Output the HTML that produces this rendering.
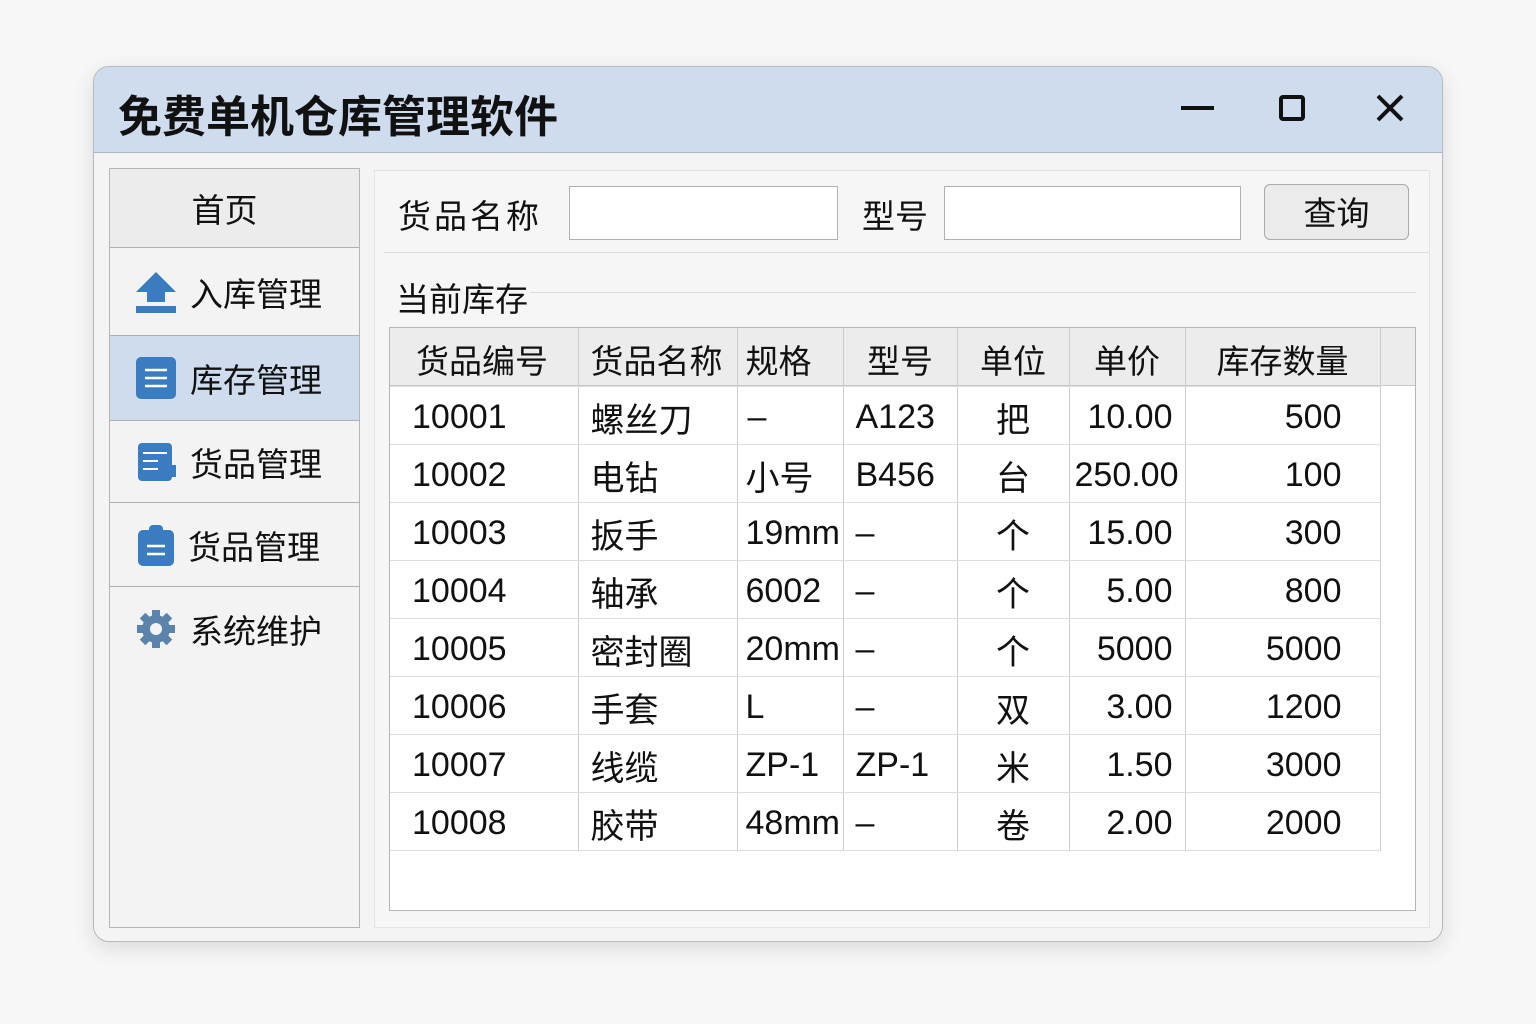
<!DOCTYPE html><html><head><meta charset="utf-8"><style>
*{margin:0;padding:0;box-sizing:border-box}
body{width:1536px;height:1024px;background:#f7f7f7;font-family:"Liberation Sans","Noto Sans CJK SC",sans-serif;color:#111;position:relative;overflow:hidden}
.a{position:absolute}
.win{left:93px;top:66px;width:1350px;height:876px;border:1px solid #b5b9c0;border-radius:16px;background:#f4f4f4;overflow:hidden;box-shadow:0 6px 22px rgba(0,0,0,.12)}
.title{left:0;top:0;width:1350px;height:86px;background:#cfdcee;border-bottom:1px solid #a9b4c4}
.side{left:109px;top:168px;width:251px;height:760px;border:1px solid #b5b5b5;background:#f3f3f3}
.it{position:absolute;left:0;width:249px;border-bottom:1px solid #b0b0b0;font-size:33px;display:flex;align-items:center}
.main{left:374px;top:170px;width:1056px;height:758px;background:#f6f6f6;border:1px solid #e3e3e3}
.inp{background:#fff;border:1px solid #b0b0b0;height:54px}
table{border-collapse:collapse;font-size:33px}
td{height:58px;border-right:1px solid #ccc;border-bottom:1px solid #ddd;padding:0;white-space:nowrap}
tbody td{padding-top:4px}
</style></head><body>
<div class="a win">
 <div class="a title"></div>
 <div class="a" style="left:24px;top:14px;font-size:44px;font-weight:bold">免费单机仓库管理软件</div>
 <div class="a" style="left:1087px;top:39px;width:33px;height:4px;background:#111"></div>
 <div class="a" style="left:1185px;top:28px;width:26px;height:26px;border:4px solid #111;border-radius:4px"></div>
 <svg class="a" style="left:1281px;top:26px" width="30" height="30"><path d="M3 3L27 27M27 3L3 27" stroke="#111" stroke-width="4"/></svg>
</div>
<div class="a side">
 <div class="it" style="top:0;height:79px;background:#ececec;justify-content:center;padding-right:20px">首页</div>
 <div class="it" style="top:79px;height:88px;padding-left:24px">
  <svg width="44" height="44" viewBox="0 0 44 44"><path d="M22 2L42 22H31V32H13V22H2Z" fill="#3a7cc0"/><rect x="2" y="36" width="40" height="7" fill="#3a7cc0"/></svg><span style="margin-left:12px">入库管理</span></div>
 <div class="it" style="top:167px;height:85px;background:#cfdcee;padding-left:26px">
  <svg width="40" height="42" viewBox="0 0 40 42"><rect width="40" height="42" rx="5" fill="#3a7cc0"/><path d="M9 13H31M9 21H31M9 29H31" stroke="#fff" stroke-width="2.5"/></svg><span style="margin-left:14px">库存管理</span></div>
 <div class="it" style="top:252px;height:82px;padding-left:28px">
  <svg width="38" height="38" viewBox="0 0 38 38"><rect width="34" height="38" rx="4" fill="#3a7cc0"/><path d="M5 10H29M5 18H20M5 26H28" stroke="#fff" stroke-width="2"/><rect x="20" y="22" width="18" height="12" fill="#3a7cc0"/></svg><span style="margin-left:14px">货品管理</span></div>
 <div class="it" style="top:334px;height:84px;padding-left:28px">
  <svg width="36" height="42" viewBox="0 0 36 42"><rect y="6" width="36" height="36" rx="5" fill="#3a7cc0"/><rect x="11" y="1" width="14" height="10" rx="4" fill="#3a7cc0"/><path d="M9 22H27M9 30H27" stroke="#fff" stroke-width="2.5"/></svg><span style="margin-left:14px">货品管理</span></div>
 <div class="it" style="top:418px;height:84px;padding-left:26px;border-bottom:none">
  <svg width="40" height="40" viewBox="0 0 40 40"><g fill="#5b84ad"><circle cx="20" cy="20" r="14"/><g id="t"><rect x="16" y="1" width="8" height="9"/><rect x="16" y="30" width="8" height="9"/></g><use href="#t" transform="rotate(45 20 20)"/><use href="#t" transform="rotate(90 20 20)"/><use href="#t" transform="rotate(135 20 20)"/></g><circle cx="20" cy="20" r="6" fill="#f3f3f3"/></svg><span style="margin-left:14px">系统维护</span></div>
</div>
<div class="a main"></div>
<div class="a" style="left:398px;top:190px;font-size:33px;letter-spacing:3px">货品名称</div>
<div class="a inp" style="left:569px;top:186px;width:269px"></div>
<div class="a" style="left:862px;top:190px;font-size:33px">型号</div>
<div class="a inp" style="left:944px;top:186px;width:297px"></div>
<div class="a" style="left:1264px;top:184px;width:145px;height:56px;border:1px solid #aaa;border-radius:6px;background:#ebebeb;font-size:33px;text-align:center;line-height:58px">查询</div>
<div class="a" style="left:384px;top:252px;width:1046px;height:1px;background:#ddd"></div>
<div class="a" style="left:396px;top:273px;font-size:33px">当前库存</div>
<div class="a" style="left:530px;top:292px;width:886px;height:1px;background:#ddd"></div>
<div class="a" style="left:389px;top:327px;width:1027px;height:584px;background:#fff;border:1px solid #b5b5b5"></div>
<div class="a" style="left:390px;top:328px;width:1025px;height:58px;background:#ececec;border-bottom:1px solid #c8c8c8"></div>
<table class="a" style="left:390px;top:328px">
<colgroup><col style="width:188px"><col style="width:159px"><col style="width:106px"><col style="width:114px"><col style="width:112px"><col style="width:116px"><col style="width:195px"></colgroup>
<tr style="height:58px"><td style="padding-left:26px">货品编号</td><td style="padding-left:12px">货品名称</td><td style="padding-left:8px">规格</td><td style="text-align:center">型号</td><td style="text-align:center">单位</td><td style="text-align:center">单价</td><td style="text-align:center">库存数量</td></tr>
<tbody style="font-size:34px">
<tr><td style="padding-left:22px">10001</td><td style="padding-left:12px">螺丝刀</td><td style="padding-left:10px">–</td><td style="padding-left:12px">A123</td><td style="text-align:center">把</td><td style="text-align:right;padding-right:12px">10.00</td><td style="text-align:right;padding-right:38px">500</td></tr>
<tr><td style="padding-left:22px">10002</td><td style="padding-left:12px">电钻</td><td style="padding-left:8px">小号</td><td style="padding-left:12px">B456</td><td style="text-align:center">台</td><td style="text-align:right;padding-right:6px">250.00</td><td style="text-align:right;padding-right:38px">100</td></tr>
<tr><td style="padding-left:22px">10003</td><td style="padding-left:12px">扳手</td><td style="padding-left:8px">19mm</td><td style="padding-left:12px">–</td><td style="text-align:center">个</td><td style="text-align:right;padding-right:12px">15.00</td><td style="text-align:right;padding-right:38px">300</td></tr>
<tr><td style="padding-left:22px">10004</td><td style="padding-left:12px">轴承</td><td style="padding-left:8px">6002</td><td style="padding-left:12px">–</td><td style="text-align:center">个</td><td style="text-align:right;padding-right:12px">5.00</td><td style="text-align:right;padding-right:38px">800</td></tr>
<tr><td style="padding-left:22px">10005</td><td style="padding-left:12px">密封圈</td><td style="padding-left:8px">20mm</td><td style="padding-left:12px">–</td><td style="text-align:center">个</td><td style="text-align:right;padding-right:12px">5000</td><td style="text-align:right;padding-right:38px">5000</td></tr>
<tr><td style="padding-left:22px">10006</td><td style="padding-left:12px">手套</td><td style="padding-left:8px">L</td><td style="padding-left:12px">–</td><td style="text-align:center">双</td><td style="text-align:right;padding-right:12px">3.00</td><td style="text-align:right;padding-right:38px">1200</td></tr>
<tr><td style="padding-left:22px">10007</td><td style="padding-left:12px">线缆</td><td style="padding-left:8px">ZP-1</td><td style="padding-left:12px">ZP-1</td><td style="text-align:center">米</td><td style="text-align:right;padding-right:12px">1.50</td><td style="text-align:right;padding-right:38px">3000</td></tr>
<tr><td style="padding-left:22px">10008</td><td style="padding-left:12px">胶带</td><td style="padding-left:8px">48mm</td><td style="padding-left:12px">–</td><td style="text-align:center">卷</td><td style="text-align:right;padding-right:12px">2.00</td><td style="text-align:right;padding-right:38px">2000</td></tr>
</tbody></table>
</body></html>
